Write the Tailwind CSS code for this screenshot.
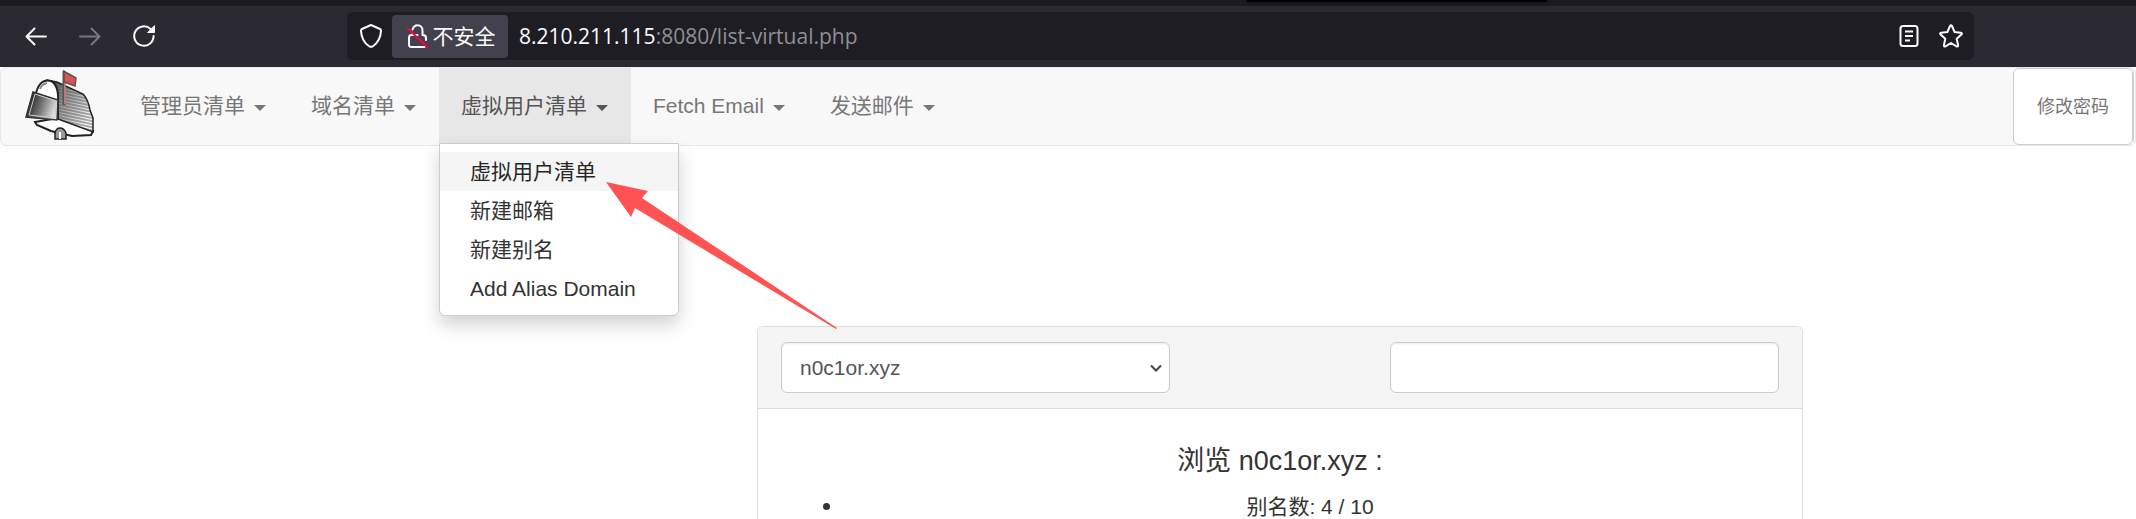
<!DOCTYPE html>
<html lang="zh-CN">
<head>
<meta charset="utf-8">
<title>虚拟用户清单</title>
<script src="https://cdn.jsdelivr.net/npm/@tailwindcss/browser@4"></script>
</head>
<body class="relative flex min-h-screen flex-col overflow-hidden bg-white font-['Liberation_Sans','Noto_Sans_CJK_SC',sans-serif] text-[21px] leading-[30px] text-[#333]">

<!-- Browser chrome -->
<div class="flex h-[6px] shrink-0 overflow-hidden bg-[#1c1b22] pl-[58.4%]"><div class="h-[2px] w-[300px] bg-black shadow-[0_0_4px_#000]"></div></div>
<div class="flex h-[61px] shrink-0 items-start bg-[#2b2a33] pt-[6px] font-['Open_Sans','Noto_Sans_CJK_SC',sans-serif]">
  <div class="flex h-12 w-[347px] shrink-0 items-center gap-[30px] pl-6">
    <button aria-label="后退" class="text-[#fbfbfe]"><svg class="size-6" viewBox="0 0 24 24" fill="none" stroke="currentColor" stroke-width="2" stroke-linecap="round" stroke-linejoin="round"><path d="M22 12.500H2.500M10.500 4.500l-8 8 8 8"/></svg></button>
    <button aria-label="前进" disabled class="text-[#77767c]"><svg class="size-6" viewBox="0 0 24 24" fill="none" stroke="currentColor" stroke-width="2" stroke-linecap="round" stroke-linejoin="round"><path d="M2 12.500h19.500M13.500 4.500l8 8-8 8"/></svg></button>
    <button aria-label="刷新" class="text-[#fbfbfe]"><svg class="size-6" viewBox="0 0 24 24" fill="none" stroke="currentColor" stroke-width="2" stroke-linecap="round"><path d="M21.600 12a9.700 9.700 0 1 1-3-7"/><path d="M22.500 2v6.500H16z" fill="currentColor" stroke="currentColor" stroke-width="1" stroke-linejoin="round"/></svg></button>
  </div>
  <div class="mr-[162px] flex h-12 min-w-0 flex-1 items-center rounded-md bg-[#1e1d24] pr-2 text-[#fbfbfe]">
    <button aria-label="跟踪保护" class="flex w-[45px] justify-center pl-[2px]"><svg class="size-6" viewBox="0 0 24 24" fill="none" stroke="currentColor" stroke-width="2" stroke-linejoin="round"><path d="M12 1 21 5c.8.400 1.100 1 1 2-.4 7-3.600 12-7.800 15q-2.200 1.800-4.400 0C5.600 19 2.400 14 2 7c-.1-1 .2-1.600 1-2z"/></svg></button>
    <button class="flex h-[43px] w-[116px] items-center justify-center gap-1 rounded bg-[#42414d] text-[21px]">
      <svg class="h-6 w-6 shrink-0" viewBox="0 0 24 24" fill="none" stroke="currentColor" stroke-width="2" stroke-linejoin="round" stroke-linecap="round"><path d="M7.500 5.500C8.500 2.500 10 1.200 12.500 1.200c3 0 5 2.300 5 5.300V11c2.300 0 3.500.8 3.500 3v2M12.500 11H6.500a2.500 2.500 0 0 0-2.500 2.500v7A2.500 2.500 0 0 0 6.500 23H19.500M7.800 9.500V11"/><path d="M3 4.500 22.500 23.500" stroke="#ff0039"/></svg>
      <span class="whitespace-nowrap">不安全</span>
    </button>
    <a href="#" class="ml-[11px] flex-1 truncate text-[21px]">8.210.211.115<span class="text-[#8f8f94]">:8080/list-virtual.php</span></a>
    <button aria-label="阅读模式" class="mr-[18px]"><svg class="size-6" viewBox="0 0 24 24" fill="none" stroke="currentColor" stroke-width="2"><rect x="3.500" y="2" width="17" height="20" rx="2.500"/><path d="M8 7.500h8M8 12h8M8 16.500h5"/></svg></button>
    <button aria-label="添加书签"><svg class="mr-[3px] size-6" viewBox="0 0 24 24" fill="none" stroke="currentColor" stroke-width="2" stroke-linejoin="round"><path d="M11 2q1-1.600 2 0l2.600 6 6.200.7q1.800.4.600 1.800l-4.700 4.300 1.400 6.400q.1 1.800-1.600 1.100L12 19l-5.500 3.300q-1.700.7-1.600-1.100l1.400-6.400-4.700-4.300q-1.200-1.400.6-1.800L8.400 8z"/></svg></button>
  </div>
</div>

<!-- Navigation -->
<nav class="relative flex h-[79px] shrink-0 items-stretch overflow-hidden rounded-md border border-[#e7e7e7] bg-[#f8f8f8] text-[#777]">
  <a href="#" aria-label="首页" class="w-[117px] shrink-0 pt-px pl-6">
    <svg class="h-[71px] w-[70px]" viewBox="0 0 70 71">
      <defs>
        <linearGradient id="door" x1="0" y1=".3" x2="1" y2=".6"><stop offset="0" stop-color="#111"/><stop offset=".5" stop-color="#777"/><stop offset="1" stop-color="#eee"/></linearGradient>
        <linearGradient id="side" x1="0" y1="0" x2="1" y2=".6"><stop offset="0" stop-color="#222"/><stop offset=".35" stop-color="#888"/><stop offset="1" stop-color="#fff"/></linearGradient>
        <pattern id="hatch" width="6" height="3" patternUnits="userSpaceOnUse" patternTransform="rotate(12)"><path d="M0 1H6" stroke="#555" stroke-width="1"/></pattern>
      </defs>
      <path d="M10 53 33 49 68 62 66 66 47 67 26 62 12 56z" fill="#fff" stroke="#222" stroke-width="2"/>
      <path d="M30 70V64q1-5 5-5t6 5v6z" fill="#999" stroke="#222" stroke-width="1.500"/><path d="M35 63v7" stroke="#fff" stroke-width="2"/>
      <path d="M21 11 32 13 58 25q5 5 7 16l3 8v14L33 50 31 25q0-11-10-14z" fill="url(#side)"/>
      <path d="M21 11 32 13 58 25q5 5 7 16l3 8v14L33 50 31 25q0-11-10-14z" fill="url(#hatch)" stroke="#222" stroke-width="1.500"/>
      <path d="M11 24q4-15 15-12 8 4 7 21v17L9 48z" fill="#fff" stroke="#222" stroke-width="2"/>
      <path d="M15 20q2-5 7-6" fill="none" stroke="#888" stroke-width="2"/>
      <path d="M8 23 33 31 32 51 1 48z" fill="url(#door)" stroke="#333" stroke-width="1.500"/>
      <path d="M10 25 31 32 30 49 4 46z" fill="none" stroke="#ccc" stroke-width="1"/>
      <path d="M39 2v34" stroke="#555" stroke-width="3"/><path d="M40 13v22" stroke="#d98585" stroke-width="1.500"/>
      <path d="M39 2 42 4l9 5-1 8-11-4z" fill="#e05252" stroke="#555" stroke-width="1.500"/>
    </svg>
  </a>
  <button class="flex shrink-0 items-center gap-[9px] pr-[23px] pb-px pl-[22px] whitespace-nowrap">管理员清单<span class="mt-[3px] border-x-6 border-t-6 border-x-transparent border-t-[#777]"></span></button>
  <button class="flex shrink-0 items-center gap-[9px] pr-[23px] pb-px pl-[22px] whitespace-nowrap">域名清单<span class="mt-[3px] border-x-6 border-t-6 border-x-transparent border-t-[#777]"></span></button>
  <button class="flex shrink-0 items-center gap-[9px] bg-[#e7e7e7] pr-[23px] pb-px pl-[22px] whitespace-nowrap text-[#555]" aria-expanded="true">虚拟用户清单<span class="mt-[3px] border-x-6 border-t-6 border-x-transparent border-t-[#555]"></span></button>
  <button class="flex shrink-0 items-center gap-[9px] pr-[23px] pb-px pl-[22px] whitespace-nowrap">Fetch Email<span class="mt-[3px] border-x-6 border-t-6 border-x-transparent border-t-[#777]"></span></button>
  <button class="flex shrink-0 items-center gap-[9px] pr-[23px] pb-px pl-[22px] whitespace-nowrap">发送邮件<span class="mt-[3px] border-x-6 border-t-6 border-x-transparent border-t-[#777]"></span></button>
  <div class="ml-auto flex shrink-0 items-start">
    <button class="h-[77px] rounded-md border border-[#ccc] bg-white px-[23px] text-[18px] whitespace-nowrap">修改密码</button>
    <span class="-mr-[6px] h-[77px] w-2 rounded-l-md border border-[#ccc] bg-white"></span>
  </div>
</nav>

<!-- Open menu -->
<div class="absolute top-[143px] left-[439px] z-10 w-60 rounded-b-md border border-[#ccc] bg-white pt-2 pb-[7px] shadow-[0_9px_18px_rgba(0,0,0,0.175)]">
  <a href="#" class="block bg-[#f5f5f5] px-[30px] py-1 leading-[31px] text-[#262626]">虚拟用户清单</a>
  <a href="#" class="block px-[30px] py-1 leading-[31px]">新建邮箱</a>
  <a href="#" class="block px-[30px] py-1 leading-[31px]">新建别名</a>
  <a href="#" class="block px-[30px] py-1 leading-[31px] whitespace-nowrap">Add Alias Domain</a>
</div>

<!-- Domain panel -->
<main class="mt-[180px] grid flex-1 grid-cols-[757fr_1046fr_333fr]">
  <section class="col-start-2 flex flex-col rounded-t-md border border-b-0 border-[#ddd]">
    <form class="flex justify-between rounded-t-md border-b border-[#ddd] bg-[#f5f5f5] px-[23px] py-[15px]">
      <div class="relative w-[39%]">
        <select aria-label="域名" class="h-[51px] w-full appearance-none rounded-md border border-[#ccc] bg-white px-[18px] text-[#555] shadow-[inset_0_1px_2px_rgba(0,0,0,0.075)]"><option>n0c1or.xyz</option></select>
        <svg class="pointer-events-none absolute top-5 right-2 size-3" viewBox="0 0 12 12" fill="none" stroke="#444" stroke-width="2"><path d="M1 3.500 6 8.500 11 3.500"/></svg>
      </div>
      <input aria-label="搜索" type="text" class="h-[51px] w-[39%] rounded-md border border-[#ccc] bg-white px-[18px] text-[#555] shadow-[inset_0_1px_2px_rgba(0,0,0,0.075)]">
    </form>
    <div class="px-[22px] pt-8 text-center">
      <h4 class="text-[27px] leading-[40px]">浏览 n0c1or.xyz :</h4>
      <ul class="mt-[11px] pl-[60px]"><li class="relative before:absolute before:top-[11px] before:-left-[17px] before:size-[7px] before:rounded-full before:bg-[#333]">别名数: 4 / 10</li></ul>
    </div>
  </section>
</main>

<!-- Pointer annotation -->
<svg class="pointer-events-none absolute top-[180px] left-[604px] z-20 h-[152px] w-[236px]" viewBox="604 180 236 152" fill="#ff5252"><path d="M606 182 648 191 642 198 837 328 836 329 635 208 631 217z"/></svg>
</body>
</html>
